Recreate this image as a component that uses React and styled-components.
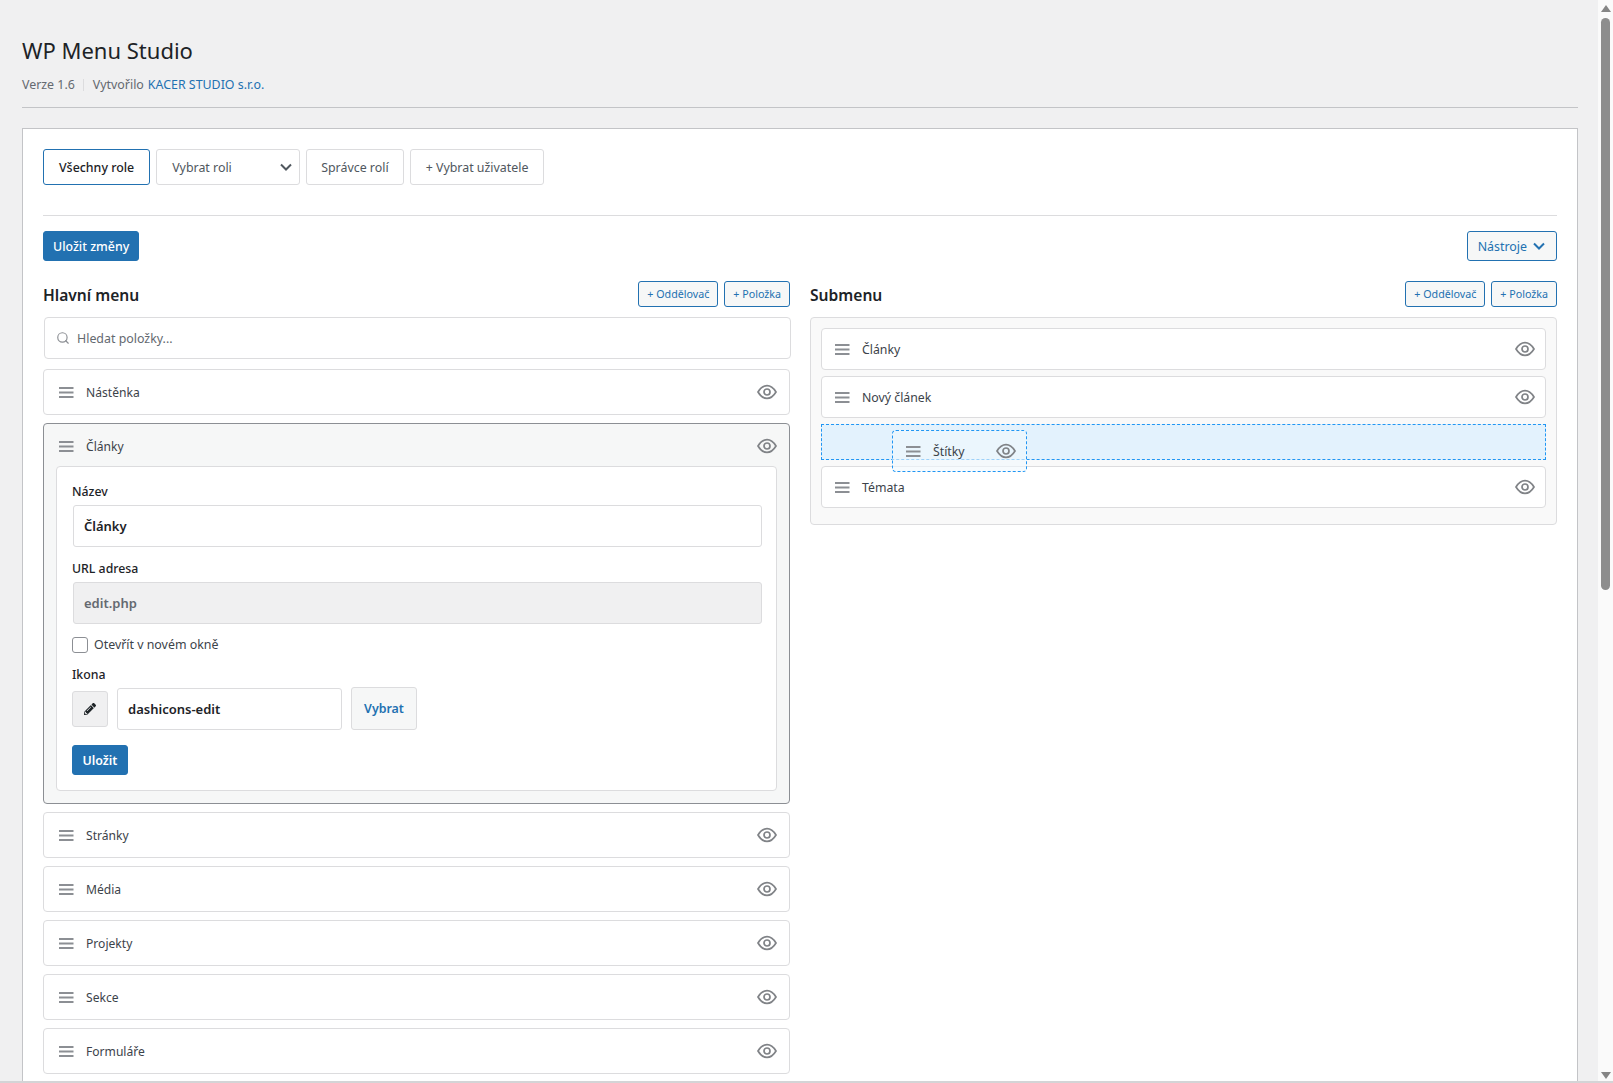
import React from "react";
import styled, { createGlobalStyle } from "styled-components";
import { Search } from "lucide-react";
import { FaPencilAlt } from "react-icons/fa";

const FONT = `"Noto Sans", "Open Sans", "Liberation Sans", sans-serif`;

const GlobalStyle = createGlobalStyle`
  html, body {
    margin: 0;
    padding: 0;
    height: 100%;
    overflow: hidden;
    background: #f0f0f1;
  }
  * {
    box-sizing: border-box;
  }
`;

const Shell = styled.div`
  display: flex;
  height: 100vh;
  overflow: hidden;
  background: #f0f0f1;
  font-family: ${FONT};
  border-bottom: 2px solid #d4d4d6;
`;

const Main = styled.main`
  flex: 1;
  min-width: 0;
  padding: 0 20px 0 22px;
  overflow: hidden;
`;

const ScrollTrack = styled.div`
  width: 15px;
  flex: none;
  display: flex;
  flex-direction: column;
  align-items: center;
  background: #fafafa;
  padding: 5px 0 2px;
`;

const ScrollArrow = styled.span`
  width: 0;
  height: 0;
  border-left: 5px solid transparent;
  border-right: 5px solid transparent;
  border-${({ down }) => (down ? "top" : "bottom")}: 7px solid #858585;
  margin-top: ${({ down }) => (down ? "auto" : "0")};
`;

const ScrollThumb = styled.div`
  width: 9px;
  height: 572px;
  margin-top: 6px;
  border-radius: 5px;
  background: #8d8d8d;
`;

const PageTitle = styled.h1`
  margin: 0;
  padding-top: 34px;
  font-size: 22px;
  line-height: 32px;
  font-weight: 400;
  color: #1d2327;
`;

const Meta = styled.p`
  display: flex;
  align-items: center;
  margin: 9px 0 0;
  font-size: 12.4px;
  line-height: 20px;
  color: #646970;
`;

const MetaDivider = styled.span`
  width: 1px;
  height: 12px;
  margin: 0 8.5px;
  background: #dcdcde;
`;

const MetaLink = styled.a`
  margin-left: 4px;
  color: #2271b1;
  text-decoration: none;
`;

const HeaderRule = styled.hr`
  margin: 12px 0 20px;
  border: 0;
  border-top: 1px solid #c3c4c7;
`;

const Panel = styled.section`
  background: #fff;
  border: 1px solid #c3c4c7;
  padding: 20px;
`;

const RoleBar = styled.div`
  display: flex;
  gap: 6px;
  padding-bottom: 30px;
  border-bottom: 1px solid #dcdcde;
`;

const RoleButton = styled.button`
  height: 36px;
  padding: 0 ${({ wide }) => (wide ? "15px" : "14px")};
  font: ${({ active }) => (active ? 500 : 400)} 12.4px ${FONT};
  color: ${({ active }) => (active ? "#1d2327" : "#50575e")};
  background: #fff;
  border: 1px solid ${({ active }) => (active ? "#2271b1" : "#dcdcde")};
  border-radius: 3px;
`;

const RoleSelect = styled.div`
  width: 144px;
  height: 36px;
  padding: 0 6px 0 15px;
  display: flex;
  align-items: center;
  justify-content: space-between;
  font-size: 12.4px;
  color: #50575e;
  border: 1px solid #dcdcde;
  border-radius: 3px;
`;

const ActionBar = styled.div`
  display: flex;
  justify-content: space-between;
  margin-top: 15px;
`;

const PrimaryButton = styled.button`
  height: 30px;
  padding: 0 9px;
  font: 500 12.4px ${FONT};
  color: #fff;
  background: #2271b1;
  border: 1px solid #2271b1;
  border-radius: 3px;
`;

const OutlineButton = styled.button`
  display: inline-flex;
  align-items: center;
  gap: ${({ small }) => (small ? "6px" : "5px")};
  height: ${({ small }) => (small ? "26px" : "30px")};
  padding: 0 ${({ small }) => (small ? "8px" : "10px")};
  font: 400 ${({ small }) => (small ? "10.7px" : "12.4px")} ${FONT};
  color: #2271b1;
  background: #f6f7f7;
  border: 1px solid #2271b1;
  border-radius: 3px;
`;

const Columns = styled.div`
  display: grid;
  grid-template-columns: 1fr 1fr;
  column-gap: 20px;
  margin-top: 20px;
`;

const ColumnHeader = styled.div`
  display: flex;
  align-items: center;
  justify-content: space-between;
  height: 26px;
  margin-bottom: 10px;
`;

const ColumnTitle = styled.h2`
  margin: 1px 0 0;
  font-size: 15.6px;
  font-weight: 600;
  color: #1d2327;
`;

const ButtonGroup = styled.div`
  display: flex;
  gap: 6px;
`;

const SearchBox = styled.label`
  display: flex;
  align-items: center;
  gap: 7px;
  height: 42px;
  padding: 0 11px;
  margin: 0 -1px 10px 1px;
  background: #fff;
  border: 1px solid #dcdcde;
  border-radius: 4px;
  color: #8c8f94;
`;

const SearchInput = styled.input`
  flex: 1;
  min-width: 0;
  border: 0;
  outline: 0;
  padding: 0;
  font: 400 12.4px ${FONT};
  color: #1d2327;

  &::placeholder {
    color: #646970;
    opacity: 1;
  }
`;

const MenuList = styled.div`
  display: flex;
  flex-direction: column;
  gap: 8px;
`;

const ItemCard = styled.div`
  border: 1px solid ${({ open }) => (open ? "#8c8f94" : "#dcdcde")};
  border-radius: 4px;
  background: ${({ open }) => (open ? "#f6f7f7" : "#fff")};
`;

const ItemRow = styled.div`
  display: flex;
  align-items: center;
  height: ${({ sub, open }) => (sub ? "40px" : open ? "42px" : "44px")};
  padding: ${({ open }) => (open ? "2px" : "0")} ${({ sub }) => (sub ? "10px" : "12px")} 0 ${({ sub }) => (sub ? "13px" : "15px")};
`;

const ItemLabel = styled.span`
  flex: 1;
  margin-left: 12.5px;
  font-size: ${({ sub }) => (sub ? "12.3px" : "12.1px")};
  color: #3c434a;
`;

const HandleIcon = () => (
  <svg width="14.5" height="11" viewBox="0 0 15 11" preserveAspectRatio="none" fill="#8c8f94" aria-hidden="true">
    <rect y="0" width="15" height="2" />
    <rect y="4.5" width="15" height="2" />
    <rect y="9" width="15" height="2" />
  </svg>
);

const EyeIcon = () => (
  <svg width="20" height="16" viewBox="0 0 20 16" fill="none" stroke="#808387" strokeWidth="1.7" aria-hidden="true">
    <path d="M1 8C3.6 3.7 6.6 1.6 10 1.6S16.4 3.7 19 8C16.4 12.3 13.4 14.4 10 14.4S3.6 12.3 1 8Z" />
    <circle cx="10" cy="8" r="3" />
  </svg>
);

const Chevron = ({ color }) => (
  <svg width="14" height="14" viewBox="0 0 14 14" fill="none" stroke={color} strokeWidth="2" aria-hidden="true">
    <path d="M2 4.5L7 9.5L12 4.5" />
  </svg>
);

const EditorCard = styled.div`
  margin: 0 12px 12px;
  padding: 16px 15px 15px;
  background: #fff;
  border: 1px solid #dcdcde;
  border-radius: 4px;
`;

const FieldLabel = styled.label`
  display: block;
  margin-bottom: ${({ tight }) => (tight ? "3px" : "4px")};
  font-size: 12.3px;
  line-height: 18px;
  font-weight: 500;
  color: #1d2327;
`;

const TextField = styled.input`
  display: block;
  width: 100%;
  height: 42px;
  margin: 0 0 ${({ disabled }) => (disabled ? "12px" : "12.5px")} 1px;
  padding: 0 10px;
  font: 600 13px ${FONT};
  color: ${({ disabled }) => (disabled ? "#646970" : "#1d2327")};
  background: ${({ disabled }) => (disabled ? "#f0f0f1" : "#fff")};
  border: 1px solid #dcdcde;
  border-radius: 3px;
  outline: 0;
`;

const CheckRow = styled.label`
  display: flex;
  align-items: center;
  gap: 6px;
  margin: 12px 0 12.5px;
  font-size: 12.4px;
  line-height: 18px;
  color: #3c434a;
`;

const CheckBox = styled.input`
  appearance: none;
  width: 16px;
  height: 16px;
  margin: 0;
  background: #fff;
  border: 1px solid #8c8f94;
  border-radius: 3px;
`;

const IconRow = styled.div`
  display: flex;
  align-items: center;
  gap: 9px;
  margin-bottom: 15px;
`;

const IconPreview = styled.span`
  display: flex;
  align-items: center;
  justify-content: center;
  width: 36px;
  height: 36px;
  color: #1d2327;
  background: #f0f0f1;
  border: 1px solid #dcdcde;
  border-radius: 3px;
`;

const IconInput = styled.input`
  width: 225px;
  height: 42px;
  padding: 0 10px;
  font: 600 13px ${FONT};
  color: #1d2327;
  background: #fff;
  border: 1px solid #dcdcde;
  border-radius: 3px;
  outline: 0;
`;

const PickButton = styled.button`
  width: 66px;
  height: 43px;
  font: 600 12.4px ${FONT};
  color: #2271b1;
  background: #f6f7f7;
  border: 1px solid #dcdcde;
  border-radius: 3px;
`;

const SaveButton = styled(PrimaryButton)`
  display: block;
  width: 56px;
  padding: 0;
  font-weight: 600;
`;

const SubPanel = styled.div`
  display: flex;
  flex-direction: column;
  gap: 6px;
  padding: 10px 10px 16px;
  background: #f9f9f9;
  border: 1px solid #dcdcde;
  border-radius: 4px;
`;

const DropSlot = styled.div`
  position: relative;
  height: 36px;
  background: #e3f2fd;
  border: 1px dashed #2196f3;
`;

const DragGhost = styled.div`
  position: absolute;
  top: 5px;
  left: 70px;
  width: 135px;
  height: 42px;
  display: flex;
  align-items: center;
  padding: 0 10px 0 13px;
  background: rgba(240, 248, 254, 0.6);
  border: 1px dashed #2196f3;
  border-radius: 4px;
`;

const mainItems = ["Stránky", "Média", "Projekty", "Sekce", "Formuláře"];

const MenuRow = ({ label, sub, open }) => (
  <ItemRow sub={sub} open={open}>
    <HandleIcon />
    <ItemLabel sub={sub}>{label}</ItemLabel>
    <EyeIcon />
  </ItemRow>
);

const App = () => (
  <>
    <GlobalStyle />
    <Shell>
      <Main>
        <PageTitle>WP Menu Studio</PageTitle>
        <Meta>
          Verze 1.6
          <MetaDivider />
          Vytvořilo
          <MetaLink href="#">KACER STUDIO s.r.o.</MetaLink>
        </Meta>
        <HeaderRule />
        <Panel>
          <RoleBar>
            <RoleButton active wide>Všechny role</RoleButton>
            <RoleSelect>
              Vybrat roli
              <Chevron color="#50575e" />
            </RoleSelect>
            <RoleButton>Správce rolí</RoleButton>
            <RoleButton wide>+ Vybrat uživatele</RoleButton>
          </RoleBar>
          <ActionBar>
            <PrimaryButton>Uložit změny</PrimaryButton>
            <OutlineButton>
              Nástroje
              <Chevron color="#2271b1" />
            </OutlineButton>
          </ActionBar>
          <Columns>
            <div>
              <ColumnHeader>
                <ColumnTitle>Hlavní menu</ColumnTitle>
                <ButtonGroup>
                  <OutlineButton small>+ Oddělovač</OutlineButton>
                  <OutlineButton small>+ Položka</OutlineButton>
                </ButtonGroup>
              </ColumnHeader>
              <SearchBox>
                <Search size={14} />
                <SearchInput placeholder="Hledat položky..." />
              </SearchBox>
              <MenuList>
                <ItemCard>
                  <MenuRow label="Nástěnka" />
                </ItemCard>
                <ItemCard open>
                  <MenuRow open label="Články" />
                  <EditorCard>
                    <FieldLabel>Název</FieldLabel>
                    <TextField defaultValue="Články" />
                    <FieldLabel>URL adresa</FieldLabel>
                    <TextField defaultValue="edit.php" disabled />
                    <CheckRow>
                      <CheckBox type="checkbox" />
                      Otevřít v novém okně
                    </CheckRow>
                    <FieldLabel tight>Ikona</FieldLabel>
                    <IconRow>
                      <IconPreview>
                        <FaPencilAlt size={12} />
                      </IconPreview>
                      <IconInput defaultValue="dashicons-edit" />
                      <PickButton>Vybrat</PickButton>
                    </IconRow>
                    <SaveButton>Uložit</SaveButton>
                  </EditorCard>
                </ItemCard>
                {mainItems.map((label) => (
                  <ItemCard key={label}>
                    <MenuRow label={label} />
                  </ItemCard>
                ))}
                <ItemCard>
                  <ItemRow />
                </ItemCard>
              </MenuList>
            </div>
            <div>
              <ColumnHeader>
                <ColumnTitle>Submenu</ColumnTitle>
                <ButtonGroup>
                  <OutlineButton small>+ Oddělovač</OutlineButton>
                  <OutlineButton small>+ Položka</OutlineButton>
                </ButtonGroup>
              </ColumnHeader>
              <SubPanel>
                <ItemCard>
                  <MenuRow sub label="Články" />
                </ItemCard>
                <ItemCard>
                  <MenuRow sub label="Nový článek" />
                </ItemCard>
                <DropSlot>
                  <DragGhost>
                    <HandleIcon />
                    <ItemLabel sub>Štítky</ItemLabel>
                    <EyeIcon />
                  </DragGhost>
                </DropSlot>
                <ItemCard>
                  <MenuRow sub label="Témata" />
                </ItemCard>
              </SubPanel>
            </div>
          </Columns>
        </Panel>
      </Main>
      <ScrollTrack>
        <ScrollArrow />
        <ScrollThumb />
        <ScrollArrow down />
      </ScrollTrack>
    </Shell>
  </>
);

export default App;
